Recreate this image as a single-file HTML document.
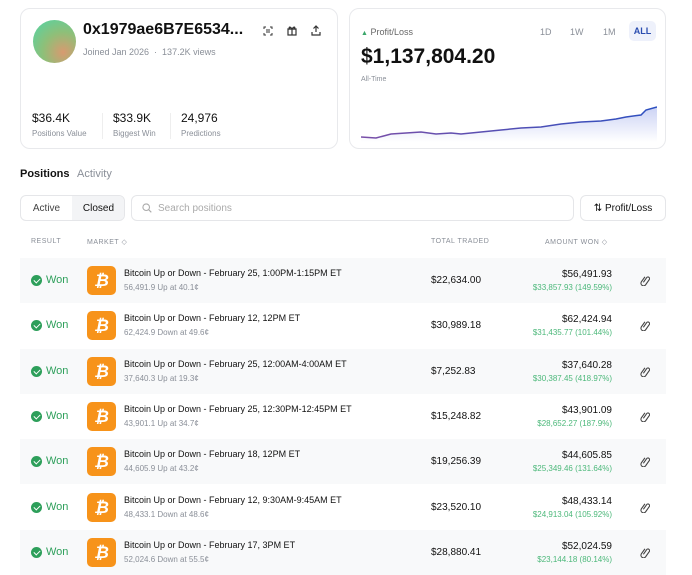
<!DOCTYPE html>
<html><head><meta charset="utf-8"><style>
*{box-sizing:border-box;margin:0;padding:0}
body{width:692px;height:561px;overflow:hidden;background:#fff;font-family:"Liberation Sans",sans-serif;color:#111;position:relative}
.card{position:absolute;border:1px solid #e8e9ec;border-radius:10px;background:#fff}
.a{position:absolute}
.gray{color:#8a8f98}
.row{position:absolute;left:20px;width:646px;height:45px}
.row.s{background:#f8f9fa}
.won{position:absolute;left:11px;top:16px;font-size:11px;color:#2d9f5a;display:flex;align-items:center;gap:4px}
.won i{width:11px;height:11px;border-radius:50%;background:#2d9f5a;display:inline-block;position:relative}
.won i:after{content:"";position:absolute;left:3.5px;top:2px;width:3px;height:5px;border:solid #fff;border-width:0 1.5px 1.5px 0;transform:rotate(45deg)}
.btc{position:absolute;left:67px;top:8px;width:29px;height:29px;border-radius:5px;background:#f7931a;color:#fff;font-weight:bold;font-size:17px;text-align:center;line-height:29px;font-style:italic}
.t1{position:absolute;left:104px;top:10px;font-size:9px;color:#111}
.t2{position:absolute;left:104px;top:25px;font-size:8px;color:#8a8f98}
.tt{position:absolute;left:411px;top:17px;font-size:10px}
.aw{position:absolute;right:54px;top:11px;font-size:10px;text-align:right}
.aw b{font-weight:normal;display:block}
.aw span{font-size:8px;color:#4cb87a;display:block;margin-top:3px}
.lk{position:absolute;left:620px;top:17px}
</style></head><body>
<div class="card" style="left:20px;top:8px;width:318px;height:141px">
 <div class="a" style="left:12px;top:11px;width:43px;height:43px;border-radius:50%;background:radial-gradient(circle at 70% 75%,#d89a70 0,#8fbf78 45%,#4fd6a8 100%)"></div>
 <div class="a" style="left:62px;top:12px;font-size:16px;font-weight:bold">0x1979ae6B7E6534...</div>
 <div class="a gray" style="left:62px;top:38px;font-size:9px">Joined Jan 2026 &nbsp;·&nbsp; 137.2K views</div>
 <svg class="a" style="left:242px;top:17px" width="10" height="10" viewBox="0 0 10 10" fill="none" stroke="#333" stroke-width="1"><path d="M1 3V1h2M7 1h2v2M9 7v2H7M3 9H1V7M3 4h4M3 6h4"/></svg>
 <svg class="a" style="left:266px;top:16px" width="10" height="11" viewBox="0 0 10 11" fill="none" stroke="#333" stroke-width="1.2"><rect x="1" y="4" width="8" height="6"/><path d="M0.5 4h9M5 4v6M5 4C3 1 1 2 3 4M5 4C7 1 9 2 7 4"/></svg>
 <svg class="a" style="left:290px;top:16px" width="10" height="11" viewBox="0 0 10 11" fill="none" stroke="#333" stroke-width="1.2"><path d="M5 7V1M2.5 3.5L5 1l2.5 2.5M1 7v3h8V7"/></svg>
 <div class="a" style="left:11px;top:102px;font-size:12px">$36.4K</div>
 <div class="a gray" style="left:11px;top:120px;font-size:8px">Positions Value</div>
 <div class="a" style="left:81px;top:104px;width:1px;height:26px;background:#eee"></div>
 <div class="a" style="left:92px;top:102px;font-size:12px">$33.9K</div>
 <div class="a gray" style="left:92px;top:120px;font-size:8px">Biggest Win</div>
 <div class="a" style="left:149px;top:104px;width:1px;height:26px;background:#eee"></div>
 <div class="a" style="left:160px;top:102px;font-size:12px">24,976</div>
 <div class="a gray" style="left:160px;top:120px;font-size:8px">Predictions</div>
</div>
<div class="card" style="left:349px;top:8px;width:317px;height:141px">
 <div class="a" style="left:11px;top:18px;font-size:9px;color:#666"><span style="color:#3aa66a;font-size:7px">▲</span> Profit/Loss</div>
 <div class="a gray" style="left:190px;top:18px;font-size:9px">1D</div>
 <div class="a gray" style="left:220px;top:18px;font-size:9px">1W</div>
 <div class="a gray" style="left:253px;top:18px;font-size:9px">1M</div>
 <div class="a" style="left:279px;top:12px;width:27px;height:20px;border-radius:5px;background:#eef1fb;color:#2a4db0;font-size:9px;font-weight:bold;text-align:center;line-height:20px">ALL</div>
 <div class="a" style="left:11px;top:36px;font-size:21px;font-weight:bold">$1,137,804.20</div>
 <div class="a gray" style="left:11px;top:67px;font-size:7px">All-Time</div>
 <svg class="a" style="left:11px;top:88px" width="296" height="45" viewBox="0 0 296 45">
  <defs><linearGradient id="g" x1="0" y1="0" x2="0" y2="1"><stop offset="0" stop-color="#6b7fe0" stop-opacity=".35"/><stop offset="1" stop-color="#6b7fe0" stop-opacity="0"/></linearGradient>
  <linearGradient id="l" x1="0" x2="1"><stop offset="0" stop-color="#7a4fa8"/><stop offset="1" stop-color="#2c4fc0"/></linearGradient></defs>
  <path d="M0 40 L15 41 L30 37 L45 36 L60 35 L75 37 L90 36 L100 37 L120 35 L140 33 L160 31 L180 30 L200 27 L220 25 L240 24 L255 22 L265 20 L280 18 L285 13 L296 10 L296 45 L0 45Z" fill="url(#g)"/>
  <path d="M0 40 L15 41 L30 37 L45 36 L60 35 L75 37 L90 36 L100 37 L120 35 L140 33 L160 31 L180 30 L200 27 L220 25 L240 24 L255 22 L265 20 L280 18 L285 13 L296 10" fill="none" stroke="url(#l)" stroke-width="1.5"/>
 </svg>
</div>
<div class="a" style="left:20px;top:168px;font-size:11px;font-weight:bold">Positions</div>
<div class="a gray" style="left:77px;top:168px;font-size:11px">Activity</div>
<div class="a" style="left:20px;top:195px;width:105px;height:26px;border:1px solid #e5e6e9;border-radius:6px;overflow:hidden;font-size:10px">
 <div class="a" style="left:0;top:0;width:51px;height:24px;line-height:26px;text-align:center;color:#444">Active</div>
 <div class="a" style="left:51px;top:0;width:53px;height:24px;line-height:26px;text-align:center;background:#f3f4f6">Closed</div>
</div>
<div class="a" style="left:131px;top:195px;width:443px;height:26px;border:1px solid #e5e6e9;border-radius:6px;font-size:10px;color:#aaa;line-height:25px;padding-left:26px">Search positions
 <svg class="a" style="left:10px;top:7px" width="10" height="10" viewBox="0 0 10 10" fill="none" stroke="#aaa" stroke-width="1.1"><circle cx="4.2" cy="4.2" r="3.3"/><path d="M6.7 6.7L9.3 9.3"/></svg></div>
<div class="a" style="left:580px;top:195px;width:86px;height:26px;border:1px solid #e5e6e9;border-radius:6px;font-size:10px;line-height:25px;text-align:center">⇅ Profit/Loss</div>
<div class="a gray" style="left:31px;top:238px;font-size:7px;letter-spacing:.5px">RESULT</div>
<div class="a gray" style="left:87px;top:238px;font-size:7px;letter-spacing:.5px">MARKET ◇</div>
<div class="a gray" style="left:431px;top:238px;font-size:7px;letter-spacing:.5px">TOTAL TRADED</div>
<div class="a gray" style="left:545px;top:238px;font-size:7px;letter-spacing:.5px">AMOUNT WON ◇</div>

<svg width="0" height="0" style="position:absolute"><defs><g id="clip"><path d="M3 7L7 3a1.6 1.6 0 0 1 2.3 2.3L4.6 10A2.6 2.6 0 0 1 1 6.3L5.5 1.8" fill="none" stroke="#444" stroke-width="1.1" transform="rotate(-10 5 5)"/></g></defs></svg>

<div class="row s" style="top:258px"><div class="won"><i></i>Won</div><div class="btc">₿</div><div class="t1">Bitcoin Up or Down - February 25, 1:00PM-1:15PM ET</div><div class="t2">56,491.9 Up at 40.1¢</div><div class="tt">$22,634.00</div><div class="aw"><b>$56,491.93</b><span>$33,857.93 (149.59%)</span></div><svg class="lk" width="10" height="11"><use href="#clip"/></svg></div>
<div class="row" style="top:303px"><div class="won"><i></i>Won</div><div class="btc">₿</div><div class="t1">Bitcoin Up or Down - February 12, 12PM ET</div><div class="t2">62,424.9 Down at 49.6¢</div><div class="tt">$30,989.18</div><div class="aw"><b>$62,424.94</b><span>$31,435.77 (101.44%)</span></div><svg class="lk" width="10" height="11"><use href="#clip"/></svg></div>
<div class="row s" style="top:349px"><div class="won"><i></i>Won</div><div class="btc">₿</div><div class="t1">Bitcoin Up or Down - February 25, 12:00AM-4:00AM ET</div><div class="t2">37,640.3 Up at 19.3¢</div><div class="tt">$7,252.83</div><div class="aw"><b>$37,640.28</b><span>$30,387.45 (418.97%)</span></div><svg class="lk" width="10" height="11"><use href="#clip"/></svg></div>
<div class="row" style="top:394px"><div class="won"><i></i>Won</div><div class="btc">₿</div><div class="t1">Bitcoin Up or Down - February 25, 12:30PM-12:45PM ET</div><div class="t2">43,901.1 Up at 34.7¢</div><div class="tt">$15,248.82</div><div class="aw"><b>$43,901.09</b><span>$28,652.27 (187.9%)</span></div><svg class="lk" width="10" height="11"><use href="#clip"/></svg></div>
<div class="row s" style="top:439px"><div class="won"><i></i>Won</div><div class="btc">₿</div><div class="t1">Bitcoin Up or Down - February 18, 12PM ET</div><div class="t2">44,605.9 Up at 43.2¢</div><div class="tt">$19,256.39</div><div class="aw"><b>$44,605.85</b><span>$25,349.46 (131.64%)</span></div><svg class="lk" width="10" height="11"><use href="#clip"/></svg></div>
<div class="row" style="top:485px"><div class="won"><i></i>Won</div><div class="btc">₿</div><div class="t1">Bitcoin Up or Down - February 12, 9:30AM-9:45AM ET</div><div class="t2">48,433.1 Down at 48.6¢</div><div class="tt">$23,520.10</div><div class="aw"><b>$48,433.14</b><span>$24,913.04 (105.92%)</span></div><svg class="lk" width="10" height="11"><use href="#clip"/></svg></div>
<div class="row s" style="top:530px"><div class="won"><i></i>Won</div><div class="btc">₿</div><div class="t1">Bitcoin Up or Down - February 17, 3PM ET</div><div class="t2">52,024.6 Down at 55.5¢</div><div class="tt">$28,880.41</div><div class="aw"><b>$52,024.59</b><span>$23,144.18 (80.14%)</span></div><svg class="lk" width="10" height="11"><use href="#clip"/></svg></div>
</body></html>
